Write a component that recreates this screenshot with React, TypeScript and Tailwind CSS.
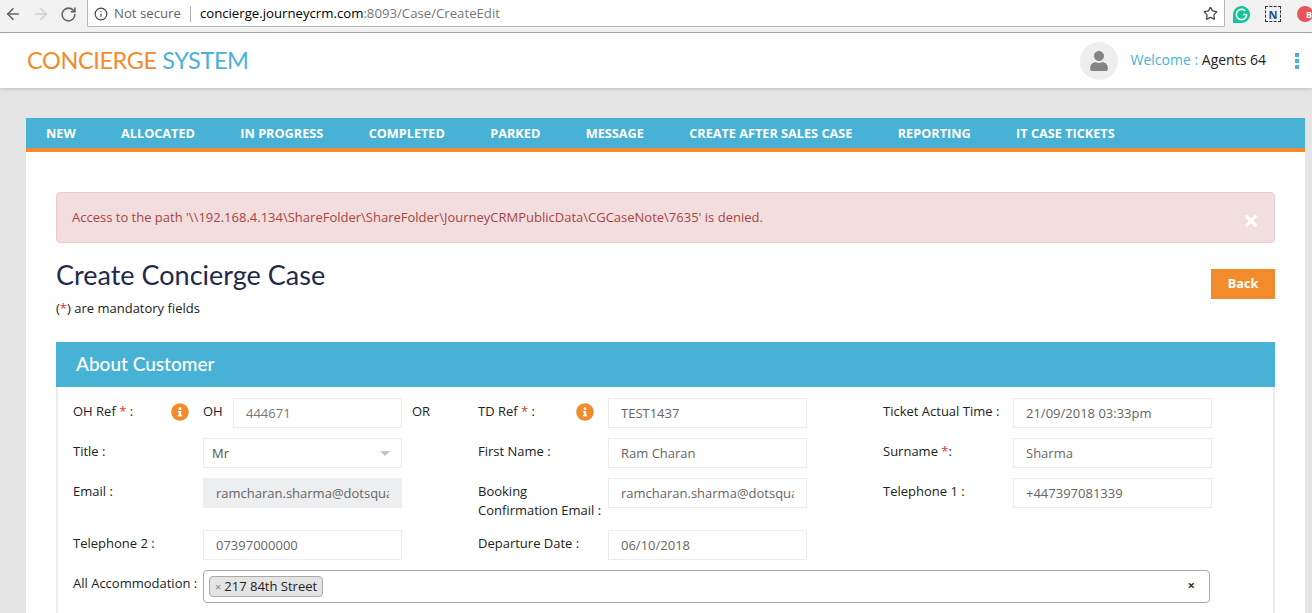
import { ArrowLeft, ArrowRight, RotateCw, Star, Info } from 'lucide-react';
import { FaUser, FaInfoCircle } from 'react-icons/fa';
import { SiGrammarly } from 'react-icons/si';

const navItems = [
  'NEW',
  'ALLOCATED',
  'IN PROGRESS',
  'COMPLETED',
  'PARKED',
  'MESSAGE',
  'CREATE AFTER SALES CASE',
  'REPORTING',
  'IT CASE TICKETS',
];

const Req = ({ children = '*' }: { children?: string }) => <span className="text-[#e3342f]">{children}</span>;

const Field = ({ value, disabled }: { value: string; disabled?: boolean }) => (
  <div
    className={`flex h-[30px] w-[199px] items-center whitespace-nowrap border pl-[12px] pr-[12px] pt-[1px] text-[13px] text-[#666] ${
      disabled ? 'border-[#eceeef] bg-[#eceeef]' : 'border-[#ececec] bg-white'
    }`}
  >
    <span className="block w-full overflow-hidden">{value}</span>
  </div>
);

const Label = ({ children }: { children: React.ReactNode }) => (
  <div className="w-[130px] shrink-0 pt-[4px] text-[13px] leading-[19px] text-[#222]">{children}</div>
);

const Row = ({ className, children }: { className: string; children: React.ReactNode }) => (
  <div className={`grid grid-cols-[405px_405px_329px] ${className}`}>{children}</div>
);

const Cell = ({ children }: { children: React.ReactNode }) => <div className="flex items-start">{children}</div>;

const BrowserBar = () => (
  <div className="flex h-[33px] items-center border-b border-[#a9a9a9] bg-[#f2f2f2] pb-[4px]">
    <div className="flex w-[87px] shrink-0 items-center pl-[4px] text-[#5f6368]">
      <ArrowLeft size={18} strokeWidth={2.2} />
      <ArrowRight size={18} strokeWidth={2.2} className="ml-[10px] text-[#cfcfcf]" />
      <RotateCw size={17} strokeWidth={2.2} className="ml-[10px]" />
    </div>
    <div className="flex h-[27px] w-[1138px] items-center self-start rounded-b-[2px] border border-t-0 border-[#b5b5b5] bg-white pl-[6px] pr-[5px] pt-[1px] text-[13.2px]">
      <Info size={14} strokeWidth={2} className="text-[#444]" />
      <span className="ml-[6px] text-[#5f6368]">Not secure</span>
      <span className="ml-[9px] h-[16px] w-px bg-[#b0b0b0]" />
      <span className="ml-[9px] text-black">concierge.journeycrm.com</span>
      <span className="text-[#777]">:8093/Case/CreateEdit</span>
      <Star size={15} strokeWidth={2} className="ml-auto mr-[1px] text-[#444]" />
    </div>
    <div className="flex flex-1 items-center overflow-hidden pl-[8px]">
      <SiGrammarly size={17} className="shrink-0 text-[#15c39a]" />
      <span className="ml-[15px] flex h-[16px] w-[16px] shrink-0 items-center justify-center border border-dashed border-[#333] text-[11px] font-bold leading-none text-[#1d4f91]">
        N
      </span>
      <span className="ml-[16px] flex h-[16px] w-[16px] shrink-0 items-center justify-end rounded-full bg-[#e9545a] pr-[1px] text-[9px] font-bold leading-none text-white">
        B
      </span>
    </div>
  </div>
);

const Header = () => (
  <div className="flex h-[55px] items-center bg-white pl-[27px] shadow-[0_1px_3px_rgba(0,0,0,0.18)]">
    <div className="font-['Lato',sans-serif] text-[23.5px] leading-none tracking-[-0.4px] text-[#f28b2c]">
      CONCIERGE <span className="text-[#4ab2d6]">SYSTEM</span>
    </div>
    <div className="ml-auto flex items-center">
      <div className="flex h-[38px] w-[38px] items-center justify-center rounded-full bg-[#eeeeee]">
        <FaUser size={20} className="text-[#858585]" />
      </div>
      <div className="mb-[2px] ml-[13px] text-[14px] text-[#222]">
        <span className="text-[#4ab2d6]">Welcome : </span>Agents 64
      </div>
      <div className="ml-[29px] mr-[13px] flex flex-col gap-[2px]">
        <span className="h-[4px] w-[4px] bg-[#4ab2d6]" />
        <span className="h-[4px] w-[4px] bg-[#4ab2d6]" />
        <span className="h-[4px] w-[4px] bg-[#4ab2d6]" />
      </div>
    </div>
  </div>
);

const Nav = () => (
  <div className="flex h-[34px] gap-[45.4px] border-b-4 border-[#f28b2c] bg-[#48b2d6] pl-[20px]">
    {navItems.map((item) => (
      <a key={item} className="pt-[6px] text-[12.7px] font-bold leading-[18px] text-white">
        {item}
      </a>
    ))}
  </div>
);

const AboutCustomer = () => (
  <div className="mt-[25px]">
    <div className="flex h-[45px] items-center bg-[#48b2d6] pl-[20px] font-['Lato',sans-serif] text-[19px] font-medium text-white">
      About Customer
    </div>
    <div className="h-[226px] border-x-2 border-[#ececec] pl-[15px] pt-[11px]">
      <Row className="">
        <Cell>
          <div className="w-[98px] shrink-0 pt-[4px] text-[13px] leading-[19px] text-[#222]">
            OH Ref <Req /> :
          </div>
          <FaInfoCircle size={18} className="mt-[5px] shrink-0 text-[#f28b2c]" />
          <span className="ml-[14px] w-[30px] pt-[4px] text-[13px] leading-[19px] text-[#222]">OH</span>
          <div className="flex h-[30px] w-[169px] items-center border border-[#ececec] bg-white pl-[12px] pt-[1px] text-[13px] text-[#777]">
            444671
          </div>
          <span className="ml-[10px] pt-[4px] text-[13px] leading-[19px] text-[#222]">OR</span>
        </Cell>
        <Cell>
          <div className="w-[98px] shrink-0 pt-[4px] text-[13px] leading-[19px] text-[#222]">
            TD Ref <Req /> :
          </div>
          <FaInfoCircle size={18} className="mt-[5px] shrink-0 text-[#f28b2c]" />
          <div className="ml-[14px]">
            <Field value="TEST1437" />
          </div>
        </Cell>
        <Cell>
          <Label>Ticket Actual Time :</Label>
          <Field value="21/09/2018 03:33pm" />
        </Cell>
      </Row>
      <Row className="mt-[10px]">
        <Cell>
          <Label>Title :</Label>
          <div className="flex h-[30px] w-[199px] items-center justify-between border border-[#ececec] bg-white pl-[8px] pr-[11px] pt-[1px] text-[13px] text-[#555]">
            Mr
            <span className="h-0 w-0 border-x-[5px] border-t-[5px] border-x-transparent border-t-[#c4c4c4]" />
          </div>
        </Cell>
        <Cell>
          <Label>First Name :</Label>
          <Field value="Ram Charan" />
        </Cell>
        <Cell>
          <Label>
            Surname <Req />:
          </Label>
          <Field value="Sharma" />
        </Cell>
      </Row>
      <Row className="mt-[10px]">
        <Cell>
          <Label>Email :</Label>
          <Field value="ramcharan.sharma@dotsquares.com" disabled />
        </Cell>
        <Cell>
          <Label>
            Booking
            <br />
            Confirmation Email :
          </Label>
          <Field value="ramcharan.sharma@dotsquares.com" />
        </Cell>
        <Cell>
          <Label>Telephone 1 :</Label>
          <Field value="+447397081339" />
        </Cell>
      </Row>
      <Row className="mt-[10px]">
        <Cell>
          <Label>Telephone 2 :</Label>
          <Field value="07397000000" />
        </Cell>
        <Cell>
          <Label>Departure Date :</Label>
          <Field value="06/10/2018" />
        </Cell>
        <Cell>
          <span />
        </Cell>
      </Row>
      <div className="mt-[10px] flex items-start">
        <Label>All Accommodation :</Label>
        <div className="flex h-[33px] w-[1007px] items-center justify-between rounded-[4px] border border-[#aaaaaa] bg-white pl-[5px] pr-[14px]">
          <div className="flex h-[21px] items-center rounded-[4px] border border-[#aaaaaa] bg-[#e4e4e4] pl-[5px] pr-[5px] text-[13px] text-[#222]">
            <span className="mr-[3px] text-[11px] font-bold leading-none text-[#999]">×</span>
            217 84th Street
          </div>
          <span className="mb-[2px] text-[13px] font-bold leading-none text-[#333]">×</span>
        </div>
      </div>
    </div>
  </div>
);

export default function App() {
  return (
    <div className="h-[613px] w-[1312px] overflow-hidden bg-[#e4e5e4] font-['Open_Sans',sans-serif]">
      <BrowserBar />
      <Header />
      <div className="ml-[26px] mt-[30px] w-[1279px]">
        <Nav />
        <div className="bg-white px-[30px] pt-[40px]">
          <div className="relative flex h-[51px] items-center rounded-[4px] border border-[#ebcccc] bg-[#f2dede] pl-[15px] pt-[1px] text-[13px] text-[#a94442]">
            Access to the path '\\192.168.4.134\ShareFolder\ShareFolder\JourneyCRMPublicData\CGCaseNote\7635' is denied.
            <span className="absolute right-[15px] top-[10px] text-[28px] font-bold leading-[34px] text-white">×</span>
          </div>
          <div className="mt-[13px] flex items-start justify-between">
            <div>
              <h1 className="font-['Lato',sans-serif] text-[27px] leading-[38px] text-[#1f2a4d]">Create Concierge Case</h1>
              <p className="mt-[5px] text-[13px] leading-[18px] text-[#222]">
                (<Req />) are mandatory fields
              </p>
            </div>
            <button className="mt-[13px] h-[30px] w-[64px] bg-[#f28b2c] text-[12.7px] font-bold text-white">Back</button>
          </div>
          <AboutCustomer />
        </div>
      </div>
    </div>
  );
}
